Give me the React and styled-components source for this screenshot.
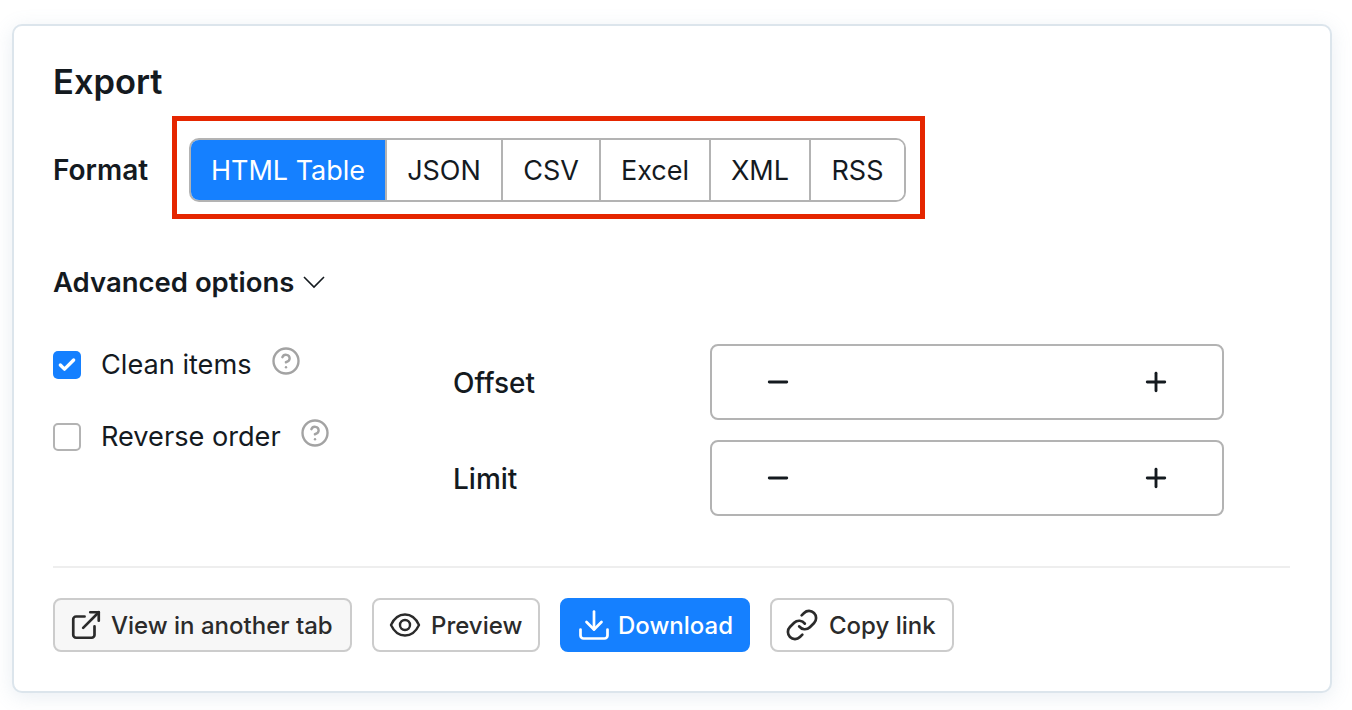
import React from 'react';
import styled, { createGlobalStyle } from 'styled-components';
import { ExternalLink, Download, Link, CircleHelp, Minus, Plus, Check } from 'lucide-react';

const GlobalStyle = createGlobalStyle`
  html {
    overflow: hidden;
  }
  body {
    margin: 0;
    min-height: 710px;
    background: #fff;
    font-family: Inter, "Liberation Sans", sans-serif;
    color: #141a1f;
  }
  * {
    box-sizing: border-box;
  }
`;

const Page = styled.div`
  padding: 24px 20px 0 12px;
`;

const Card = styled.section`
  width: 1320px;
  height: 669px;
  padding: 35px 40px 0 39px;
  background: #fff;
  border: 2px solid #dce5ec;
  border-radius: 10px;
  box-shadow: 0 4px 20px rgba(120, 150, 180, 0.16);
`;

const Title = styled.h2`
  margin: 0;
  font-size: 34.5px;
  line-height: 42px;
  font-weight: 600;
`;

const FormatRow = styled.div`
  display: flex;
  align-items: center;
  gap: 24px;
  margin-top: 13px;
`;

const RowLabel = styled.span`
  width: 95px;
  padding-top: 5px;
  font-size: 28px;
  font-weight: 600;
  white-space: nowrap;
`;

const Highlight = styled.div`
  height: 103px;
  padding: 17px 14px 12px 12px;
  border: 5px solid #e52600;
`;

const Segments = styled.div`
  display: flex;
  height: 64px;
  border: 2px solid #b3b3b3;
  border-radius: 10px;
  overflow: hidden;
`;

const Segment = styled.button`
  height: 100%;
  width: ${props => props.$width}px;
  padding: 0;
  border: 0;
  border-right: ${props => (props.$last ? '0' : '2px solid #b3b3b3')};
  background: ${props => (props.$active ? '#1580ff' : '#fff')};
  color: ${props => (props.$active ? '#fff' : '#141a1f')};
  font-family: inherit;
  font-size: 27px;
`;

const AdvancedToggle = styled.div`
  display: flex;
  align-items: center;
  gap: 8px;
  margin-top: 42px;
  font-size: 27.5px;
  font-weight: 600;
  line-height: 42px;
`;

const OptionsGrid = styled.div`
  display: flex;
  height: 172px;
  margin-top: 41px;
`;

const Checks = styled.div`
  display: flex;
  flex-direction: column;
  gap: 36px;
  width: 400px;
  padding-top: 3px;
`;

const CheckRow = styled.label`
  display: flex;
  align-items: center;
  height: 36px;
  font-size: 27.15px;
`;

const CheckText = styled.span`
  margin-top: -2px;
`;

const Box = styled.span`
  display: flex;
  align-items: center;
  justify-content: center;
  width: 28px;
  height: 28px;
  margin-right: 20px;
  border-radius: 5px;
  border: ${props => (props.$checked ? '0' : '2px solid #b3b3b3')};
  background: ${props => (props.$checked ? '#1580ff' : '#fff')};
  color: #fff;
`;

const HelpIcon = styled(CircleHelp)`
  margin: -8px 0 0 19px;
  color: #a3a3a3;
`;

const Fields = styled.div`
  display: flex;
  flex-direction: column;
  gap: 20px;
`;

const Field = styled.div`
  display: flex;
  align-items: center;
`;

const FieldLabel = styled.span`
  width: 257px;
  padding-top: 2px;
  font-size: 28px;
  font-weight: 500;
`;

const Stepper = styled.div`
  display: flex;
  align-items: center;
  justify-content: space-between;
  width: 514px;
  height: 76px;
  padding: 0 51px;
  border: 2px solid #b3b3b3;
  border-radius: 8px;
  color: #141a1f;
`;

const Divider = styled.hr`
  margin: 50px 0 0;
  border: 0;
  border-top: 2px solid #eeeeee;
`;

const Actions = styled.div`
  display: flex;
  gap: 20px;
  margin-top: 30px;
`;

const ActionButton = styled.button`
  display: flex;
  align-items: center;
  gap: ${props => props.$gap}px;
  width: ${props => props.$width}px;
  height: 54px;
  padding: 0 0 0 ${props => props.$inset}px;
  border-radius: 8px;
  border: 2px solid ${props => (props.$primary ? '#1580ff' : '#cccccc')};
  background: ${props => (props.$primary ? '#1580ff' : props.$muted ? '#f7f7f7' : '#fff')};
  color: ${props => (props.$primary ? '#fff' : '#2b2b2b')};
  font-family: inherit;
  font-size: 24px;
  font-weight: 500;
  white-space: nowrap;
`;

const formats = [
  { name: 'HTML Table', width: 196 },
  { name: 'JSON', width: 116 },
  { name: 'CSV', width: 98 },
  { name: 'Excel', width: 110 },
  { name: 'XML', width: 100 },
  { name: 'RSS', width: 93 },
];

const Chevron = () => (
  <svg width="24" height="14" viewBox="0 0 24 14" fill="none" stroke="currentColor" strokeWidth="1.6">
    <path d="M2 2l10 10L22 2" />
  </svg>
);

const EyeIcon = () => (
  <svg width="34" height="34" viewBox="0 0 34 34" fill="none" stroke="currentColor" strokeWidth="2.4" strokeLinejoin="round">
    <path d="M3 17C6 10.500 11 6.500 17 6.500S28 10.500 31 17C28 23.500 23 27.500 17 27.500S6 23.500 3 17Z" />
    <circle cx="17" cy="17" r="5" />
  </svg>
);

const NumberField = ({ label }) => (
  <Field>
    <FieldLabel>{label}</FieldLabel>
    <Stepper>
      <Minus size={30} strokeWidth={2.3} />
      <Plus size={30} strokeWidth={2.3} />
    </Stepper>
  </Field>
);

export default function App() {
  return (
    <Page>
      <GlobalStyle />
      <Card>
        <Title>Export</Title>
        <FormatRow>
          <RowLabel>Format</RowLabel>
          <Highlight>
            <Segments>
              {formats.map((f, i) => (
                <Segment key={f.name} $width={f.width} $active={i === 0} $last={i === formats.length - 1}>
                  {f.name}
                </Segment>
              ))}
            </Segments>
          </Highlight>
        </FormatRow>
        <AdvancedToggle>
          Advanced options <Chevron />
        </AdvancedToggle>
        <OptionsGrid>
          <Checks>
            <CheckRow>
              <Box $checked>
                <Check size={20} strokeWidth={4} />
              </Box>
              <CheckText>Clean items</CheckText>
              <HelpIcon size={30} strokeWidth={1.9} />
            </CheckRow>
            <CheckRow>
              <Box />
              <CheckText>Reverse order</CheckText>
              <HelpIcon size={30} strokeWidth={1.9} />
            </CheckRow>
          </Checks>
          <Fields>
            <NumberField label="Offset" />
            <NumberField label="Limit" />
          </Fields>
        </OptionsGrid>
        <Divider />
        <Actions>
          <ActionButton $muted $width={299} $inset={14} $gap={8}>
            <ExternalLink size={34} strokeWidth={1.9} />
            View in another tab
          </ActionButton>
          <ActionButton $width={168} $inset={14} $gap={9}>
            <EyeIcon />
            Preview
          </ActionButton>
          <ActionButton $primary $width={190} $inset={14} $gap={6}>
            <Download size={36} strokeWidth={1.8} />
            Download
          </ActionButton>
          <ActionButton $width={184} $inset={13} $gap={10}>
            <Link size={34} strokeWidth={1.9} />
            Copy link
          </ActionButton>
        </Actions>
      </Card>
    </Page>
  );
}
